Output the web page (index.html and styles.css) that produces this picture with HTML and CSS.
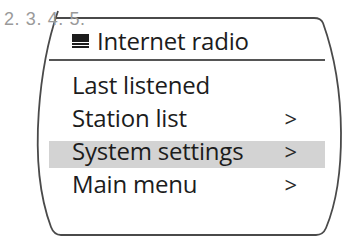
FILE: index.html
```html
<!DOCTYPE html>
<html>
<head>
<meta charset="utf-8">
<link rel="stylesheet" href="styles.css">
</head>
<body>
<div class="screen">
  <svg class="frame" width="345" height="240" viewBox="0 0 345 240">
    <path d="M58 11 C 41 60, 26 160, 51 227 Q 54 235, 61 235 L 316 235 Q 323 235, 326 228 C 346 180, 347 90, 323 23 Q 321 18, 314 18 L 54 18" fill="none" stroke="#4a4a4a" stroke-width="1.8"/>
  </svg>
  <div class="step">2. 3. 4. 5.</div>
  <div class="panel">
    <div class="header">
      <span class="icon"><span class="icon-block"></span><span class="icon-line"></span><span class="icon-line"></span></span>
      <span class="title">Internet radio</span>
    </div>
    <ul class="menu">
      <li class="item"><span class="label">Last listened</span></li>
      <li class="item"><span class="label">Station list</span><span class="arrow">&gt;</span></li>
      <li class="item selected"><span class="label">System settings</span><span class="arrow">&gt;</span></li>
      <li class="item"><span class="label">Main menu</span><span class="arrow">&gt;</span></li>
    </ul>
  </div>
</div>
</body>
</html>
```
FILE: styles.css
```css
html, body {
  margin: 0;
  padding: 0;
  background: #fff;
}
.screen {
  position: relative;
  width: 345px;
  height: 240px;
  overflow: hidden;
  background: #fff;
}
.frame {
  position: absolute;
  left: 0;
  top: 0;
}
.step {
  position: relative;
  margin-top: 11px;
  padding-left: 4px;
  height: 16px;
  font-family: "Liberation Sans", Arial, sans-serif;
  font-size: 18px;
  line-height: 16px;
  color: #9a9a9a;
  letter-spacing: 0.6px;
}
.panel {
  position: relative;
  margin-left: 49px;
  width: 276px;
  font-family: "Open Sans", "Noto Sans", sans-serif;
  color: #1c1c1c;
}
.header {
  display: flex;
  align-items: center;
  padding-left: 23px;
  height: 27px;
  padding-bottom: 5px;
  border-bottom: 2px solid #555;
}
.icon {
  display: flex;
  flex-direction: column;
  width: 17px;
  height: 15px;
  margin-right: 8px;
  margin-top: 1px;
}
.icon-block {
  height: 8px;
  background: #1c1c1c;
}
.icon-line {
  height: 1.5px;
  margin-top: 1.5px;
  background: #1c1c1c;
}
.title {
  font-size: 24px;
  line-height: 27px;
  letter-spacing: -0.2px;
}
.menu {
  list-style: none;
  margin: 0;
  padding: 14px 0 0 0;
  display: flex;
  flex-direction: column;
  gap: 6px;
}
.item {
  display: flex;
  padding: 0 28px 7px 23px;
  font-size: 24px;
  line-height: 20px;
  letter-spacing: -0.2px;
}
.item.selected {
  background: #d3d3d3;
}
.label {
  flex: 1;
}
.arrow {
  color: #2a2a2a;
  font-size: 22px;
}
```
